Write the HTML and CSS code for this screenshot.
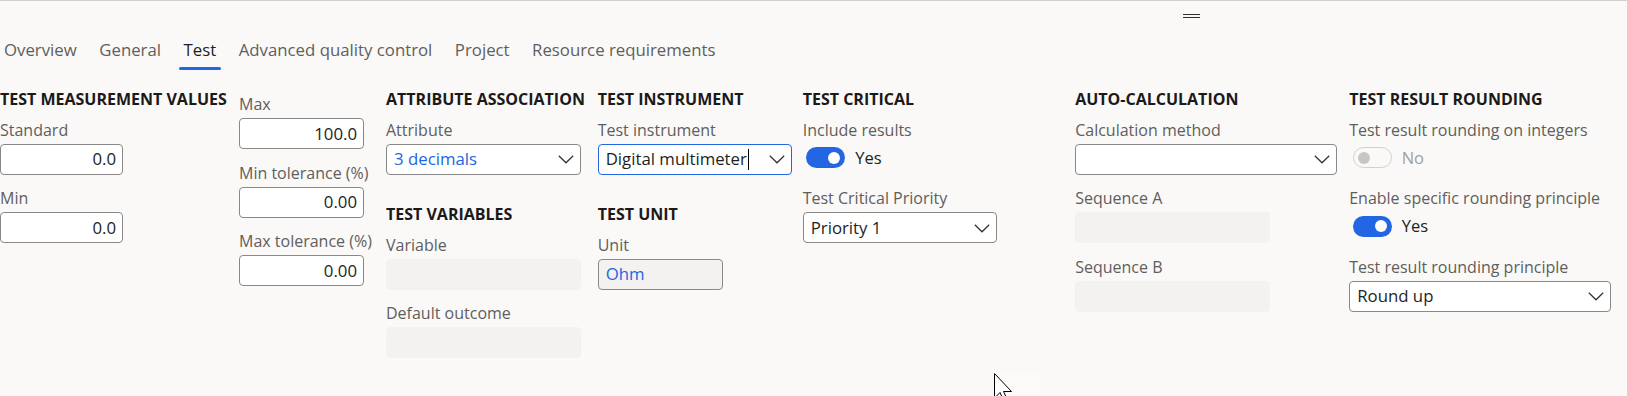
FILE: index.html
```html
<!DOCTYPE html>
<html lang="en">
<head>
<meta charset="utf-8">
<title>Test</title>
<link rel="stylesheet" href="styles.css">
</head>
<body>
<div class="page">
  <div class="grip-row"><span class="grip"></span></div>

  <nav class="tabs">
    <span class="tab">Overview</span>
    <span class="tab">General</span>
    <span class="tab active">Test</span>
    <span class="tab">Advanced quality control</span>
    <span class="tab">Project</span>
    <span class="tab">Resource requirements</span>
  </nav>

  <div class="form">
    <div class="col col-a">
      <h3 class="group-title">TEST MEASUREMENT VALUES</h3>
      <div class="field">
        <label class="label">Standard</label>
        <div class="input num w-a">0.0</div>
      </div>
      <div class="field">
        <label class="label">Min</label>
        <div class="input num w-a">0.0</div>
      </div>
    </div>

    <div class="col col-b">
      <div class="field">
        <label class="label">Max</label>
        <div class="input num w-b">100.0</div>
      </div>
      <div class="field">
        <label class="label">Min tolerance (%)</label>
        <div class="input num w-b">0.00</div>
      </div>
      <div class="field">
        <label class="label">Max tolerance (%)</label>
        <div class="input num w-b">0.00</div>
      </div>
    </div>

    <div class="col col-c">
      <h3 class="group-title">ATTRIBUTE ASSOCIATION</h3>
      <div class="field">
        <label class="label">Attribute</label>
        <div class="input select w-c"><span class="link">3 decimals</span><svg class="chev" width="16" height="9" viewBox="0 0 16 9"><polyline points="0.8,0.8 8,7.8 15.2,0.8" fill="none" stroke="#323130" stroke-width="1.2"/></svg></div>
      </div>
      <h3 class="group-title">TEST VARIABLES</h3>
      <div class="field">
        <label class="label">Variable</label>
        <div class="input disabled w-c"></div>
      </div>
      <div class="field">
        <label class="label">Default outcome</label>
        <div class="input disabled w-c"></div>
      </div>
    </div>

    <div class="col col-d">
      <h3 class="group-title">TEST INSTRUMENT</h3>
      <div class="field">
        <label class="label">Test instrument</label>
        <div class="input select focused w-d"><span class="val">Digital multimeter<span class="caret"></span></span><svg class="chev" width="16" height="9" viewBox="0 0 16 9"><polyline points="0.8,0.8 8,7.8 15.2,0.8" fill="none" stroke="#323130" stroke-width="1.2"/></svg></div>
      </div>
      <h3 class="group-title">TEST UNIT</h3>
      <div class="field">
        <label class="label">Unit</label>
        <div class="input readonly w-b"><span class="link">Ohm</span></div>
      </div>
    </div>

    <div class="col col-e">
      <h3 class="group-title">TEST CRITICAL</h3>
      <div class="field">
        <label class="label">Include results</label>
        <div class="toggle-row"><span class="toggle on"><span class="knob"></span></span><span class="toggle-text">Yes</span></div>
      </div>
      <div class="field">
        <label class="label">Test Critical Priority</label>
        <div class="input select w-d"><span class="val">Priority 1</span><svg class="chev" width="16" height="9" viewBox="0 0 16 9"><polyline points="0.8,0.8 8,7.8 15.2,0.8" fill="none" stroke="#323130" stroke-width="1.2"/></svg></div>
      </div>
    </div>

    <div class="col col-f">
      <h3 class="group-title">AUTO-CALCULATION</h3>
      <div class="field">
        <label class="label">Calculation method</label>
        <div class="input select w-f"><span class="val"></span><svg class="chev" width="16" height="9" viewBox="0 0 16 9"><polyline points="0.8,0.8 8,7.8 15.2,0.8" fill="none" stroke="#323130" stroke-width="1.2"/></svg></div>
      </div>
      <div class="field">
        <label class="label">Sequence A</label>
        <div class="input disabled w-c"></div>
      </div>
      <div class="field">
        <label class="label">Sequence B</label>
        <div class="input disabled w-c"></div>
      </div>
    </div>

    <div class="col col-g">
      <h3 class="group-title">TEST RESULT ROUNDING</h3>
      <div class="field">
        <label class="label">Test result rounding on integers</label>
        <div class="toggle-row"><span class="toggle off"><span class="knob"></span></span><span class="toggle-text muted">No</span></div>
      </div>
      <div class="field">
        <label class="label">Enable specific rounding principle</label>
        <div class="toggle-row"><span class="toggle on"><span class="knob"></span></span><span class="toggle-text">Yes</span></div>
      </div>
      <div class="field">
        <label class="label">Test result rounding principle</label>
        <div class="input select w-f"><span class="val">Round up</span><svg class="chev" width="16" height="9" viewBox="0 0 16 9"><polyline points="0.8,0.8 8,7.8 15.2,0.8" fill="none" stroke="#323130" stroke-width="1.2"/></svg></div>
      </div>
    </div>
  </div>

  <div class="hover-box"></div>
  <svg class="pointer" width="20" height="30" viewBox="0 0 20 30">
    <path d="M0.5,0.5 L0.5,25 L6,19.5 L10,28.5 L13.5,27 L9.5,18.5 L17.5,18.5 Z" fill="#ffffff" stroke="#000000" stroke-width="1" stroke-linejoin="miter"/>
  </svg>
</div>
</body>
</html>
```

FILE: styles.css
```css
* {
  box-sizing: border-box;
}

html, body {
  margin: 0;
  padding: 0;
}

body {
  background: #faf9f8;
  font-family: "Open Sans", "Noto Sans", "Liberation Sans", sans-serif;
  color: #201f1e;
  overflow: hidden;
}

.page {
  position: relative;
  width: 1627px;
  height: 396px;
  border-top: 1px solid #d2d0ce;
}

.grip-row {
  display: flex;
  padding-left: 1183px;
  padding-top: 13px;
  height: 17px;
}

.grip {
  width: 17px;
  height: 4px;
  border-top: 1px solid #323130;
  border-bottom: 1px solid #323130;
}

.tabs {
  display: flex;
  gap: 12.5px;
  margin-left: -1px;
  margin-top: 21px;
}

.tab {
  position: relative;
  padding: 0 5px 9px;
  font-size: 16.8px;
  line-height: 22px;
  color: #605e5c;
  white-space: nowrap;
}

.tab.active {
  color: #201f1e;
}

.tab.active::after {
  content: "";
  position: absolute;
  left: 0;
  right: 0;
  bottom: 0;
  height: 3px;
  border-radius: 2px;
  background: #2266e3;
}

.form {
  display: flex;
  align-items: flex-start;
  margin-top: 19px;
}

.col {
  display: flex;
  flex-direction: column;
  flex: none;
}

.col-a { width: 239px; }
.col-b { width: 147px; padding-top: 5px; }
.col-c { width: 211.7px; }
.col-d { width: 205px; }
.col-e { width: 272.5px; }
.col-f { width: 274px; }
.col-g { width: 280px; }

.group-title {
  margin: 0 0 10.7px;
  font-size: 16px;
  line-height: 20px;
  font-weight: 700;
  color: #1b1a19;
  white-space: nowrap;
}

.field {
  display: flex;
  flex-direction: column;
  gap: 4px;
}

.field + .field {
  margin-top: 13.5px;
}

.field + .group-title {
  margin-top: 29.3px;
}

.label {
  font-size: 16px;
  line-height: 20px;
  color: #605e5c;
  white-space: nowrap;
}

.input {
  height: 31px;
  border: 1px solid #8a8886;
  border-radius: 4px;
  background: #ffffff;
  font-size: 16.8px;
  line-height: 22px;
  color: #201f1e;
  display: flex;
  align-items: center;
  padding: 0 6px 0 7px;
  white-space: nowrap;
}

.input.num {
  justify-content: flex-end;
}

.input.select {
  justify-content: space-between;
}

.input.focused {
  border-color: #2266e3;
}

.input.disabled {
  background: #f3f2f1;
  border-color: #f3f2f1;
}

.input.readonly {
  background: #f3f2f1;
}

.w-a { width: 123px; }
.w-b { width: 125px; }
.w-c { width: 195px; }
.w-d { width: 194.5px; }
.w-f { width: 262px; }

.link {
  color: #2266e3;
}

.val {
  display: flex;
  align-items: center;
}

.caret {
  display: inline-block;
  width: 1px;
  height: 21px;
  background: #000000;
  margin-left: 1px;
}

.chev {
  flex: none;
  margin-top: 1px;
}

.toggle-row {
  height: 31px;
  display: flex;
  align-items: center;
  padding: 0 0 3px 3.5px;
  gap: 10px;
}

.toggle {
  position: relative;
  width: 39px;
  height: 21px;
  border-radius: 11px;
  display: flex;
  align-items: center;
}

.toggle.on {
  background: #2266e3;
  justify-content: flex-end;
  padding-right: 5px;
}

.toggle.off {
  border: 1px solid #d2d0ce;
  background: #faf9f8;
  padding-left: 4px;
}

.knob {
  width: 12px;
  height: 12px;
  border-radius: 50%;
  background: #ffffff;
}

.toggle.off .knob {
  background: #c8c6c4;
}

.toggle-text {
  font-size: 16.5px;
  line-height: 22px;
  color: #201f1e;
}

.toggle-text.muted {
  color: #a19f9d;
}

.hover-box {
  position: absolute;
  left: 994px;
  top: 371px;
  width: 48px;
  height: 25px;
  background: #fbfaf9;
}

.pointer {
  position: absolute;
  left: 994px;
  top: 372px;
}
```
